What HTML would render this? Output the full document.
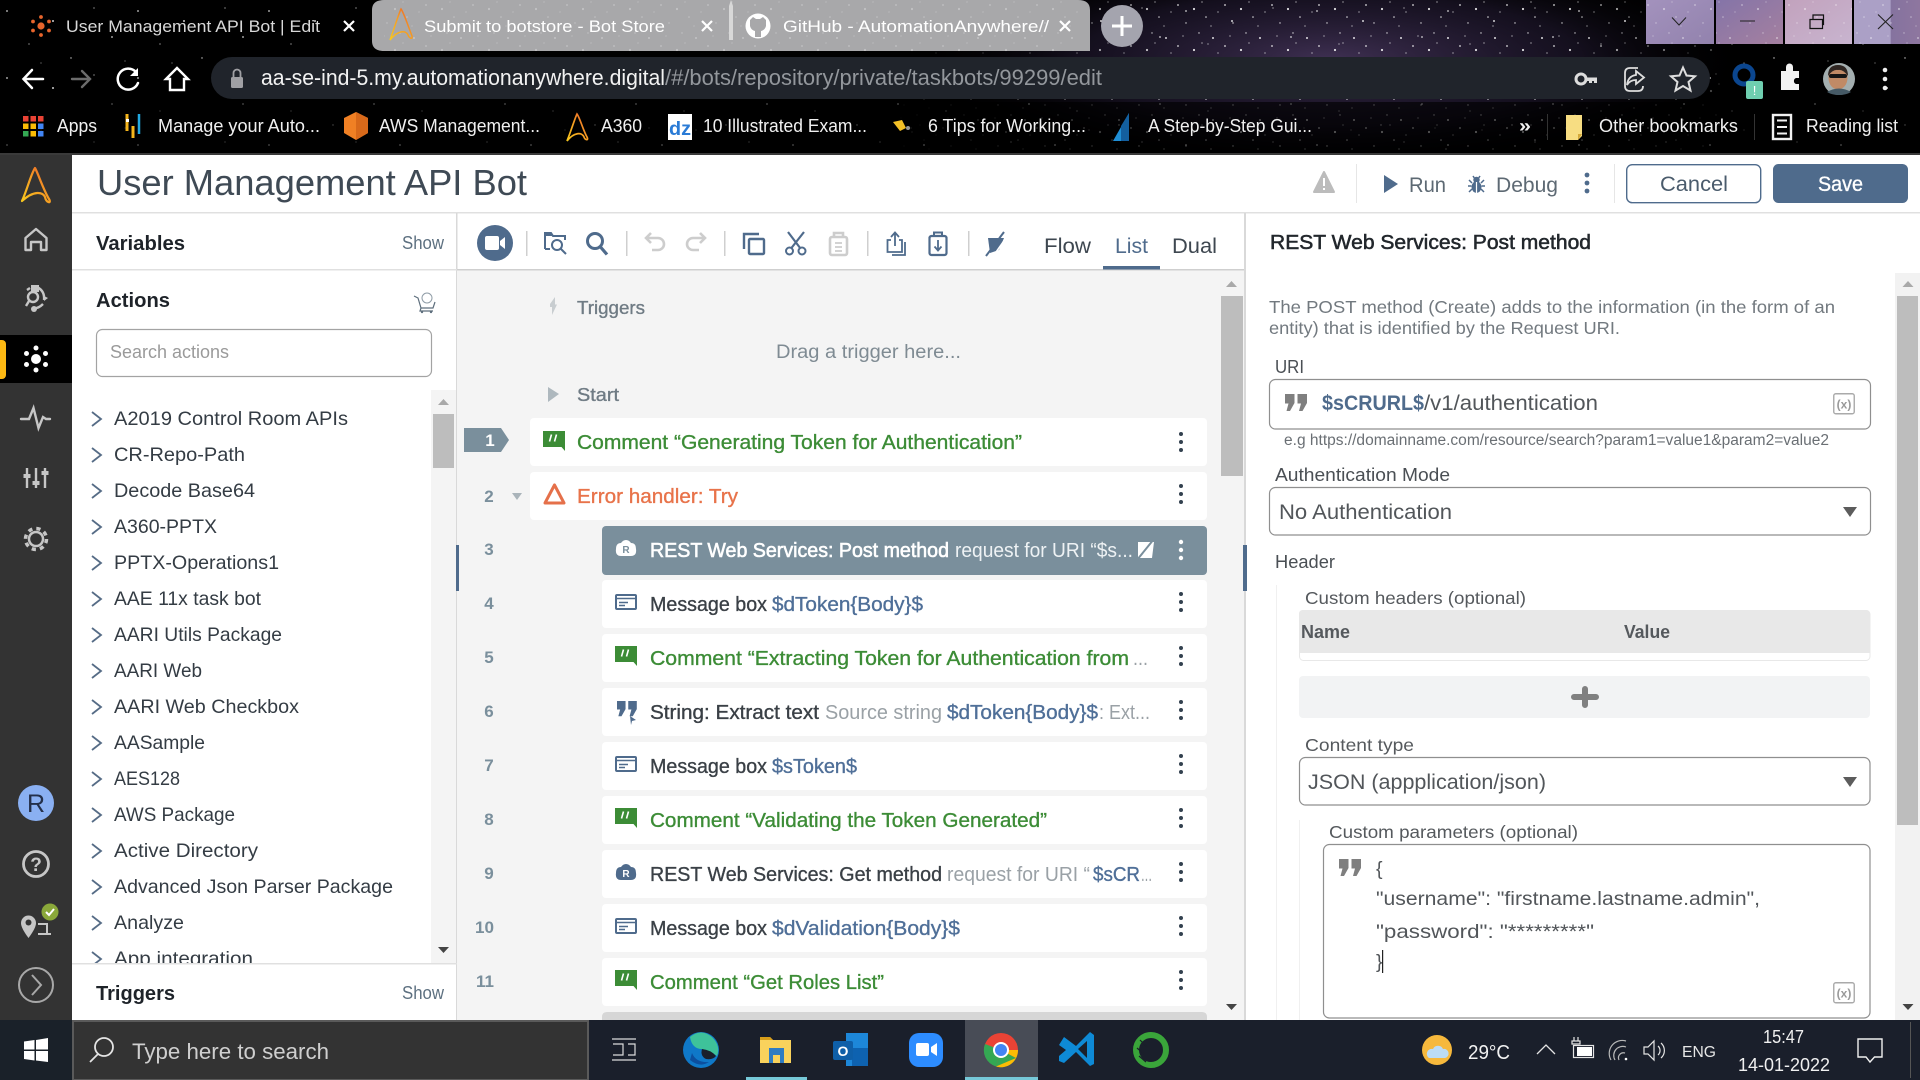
<!DOCTYPE html>
<html lang="en"><head><meta charset="utf-8"><title>User Management API Bot</title>
<style>
html,body{margin:0;padding:0;width:1920px;height:1080px;overflow:hidden;background:#fff}
svg{display:block}
text{font-family:"Liberation Sans",sans-serif;white-space:pre}
.m{stroke-width:.35px;paint-order:stroke}
.b{font-weight:bold}
</style></head><body>
<svg xmlns="http://www.w3.org/2000/svg" width="1920" height="1080" viewBox="0 0 1920 1080">
<defs>
<pattern id="sa" width="131" height="67" patternUnits="userSpaceOnUse"><g fill="#fff">
<circle cx="7" cy="11" r=".9"/><circle cx="29" cy="44" r=".6"/><circle cx="53" cy="21" r="1"/><circle cx="71" cy="58" r=".7"/><circle cx="94" cy="8" r=".6"/><circle cx="112" cy="37" r=".9"/><circle cx="125" cy="61" r=".5"/><circle cx="41" cy="63" r=".5"/></g></pattern>
<pattern id="sb" width="47" height="41" patternUnits="userSpaceOnUse"><g fill="#fff">
<circle cx="3" cy="5" r=".9"/><circle cx="11" cy="23" r=".7"/><circle cx="19" cy="9" r="1.1"/><circle cx="24" cy="33" r=".7"/><circle cx="31" cy="17" r=".8"/><circle cx="38" cy="38" r="1"/><circle cx="43" cy="12" r=".6"/><circle cx="8" cy="36" r=".6"/><circle cx="27" cy="2" r=".6"/><circle cx="36" cy="26" r=".6"/></g></pattern>
<radialGradient id="neb" cx=".5" cy=".5" r=".5"><stop offset="0" stop-color="#54406e" stop-opacity=".75"/><stop offset=".6" stop-color="#32264a" stop-opacity=".4"/><stop offset="1" stop-color="#000" stop-opacity="0"/></radialGradient>
<linearGradient id="fade" x1="0" x2="1"><stop offset="0" stop-color="#fff" stop-opacity=".1"/><stop offset=".35" stop-color="#fff" stop-opacity=".85"/><stop offset=".8" stop-color="#fff" stop-opacity=".85"/><stop offset="1" stop-color="#fff" stop-opacity=".25"/></linearGradient>
<mask id="dense"><rect x="900" y="0" width="820" height="155" fill="url(#fade)"/></mask>
<linearGradient id="lg" x1="0" y1="1" x2="1" y2="0"><stop offset="0" stop-color="#f8c91e"/><stop offset=".55" stop-color="#f59a23"/><stop offset="1" stop-color="#e8552c"/></linearGradient>
<linearGradient id="wa" x1="0" y1="0" x2="1" y2="1"><stop offset="0" stop-color="#a392bd"/><stop offset="1" stop-color="#9282ad"/></linearGradient>
<linearGradient id="wb" x1="0" y1="0" x2="1" y2="1"><stop offset="0" stop-color="#8474a8"/><stop offset="1" stop-color="#a5809f"/></linearGradient>
<linearGradient id="wc" x1="0" y1="0" x2="1" y2="1"><stop offset="0" stop-color="#c2a2bd"/><stop offset="1" stop-color="#c8b4cf"/></linearGradient>
<linearGradient id="wd" x1="0" y1="0" x2="1" y2="0"><stop offset="0" stop-color="#aba0c6"/><stop offset=".55" stop-color="#aba0c6"/><stop offset=".56" stop-color="#85739f"/><stop offset="1" stop-color="#8e769f"/></linearGradient>
<g id="chev"><path d="M0 0L9 7L0 14" fill="none" stroke="#566c86" stroke-width="1.8"/></g>
<g id="keb" fill="#33414f"><circle cx="0" cy="-8" r="2"/><circle cx="0" cy="0" r="2"/><circle cx="0" cy="8" r="2"/></g>
<g id="kebw" fill="#fff"><circle cx="0" cy="-8" r="2.2"/><circle cx="0" cy="0" r="2.2"/><circle cx="0" cy="8" r="2.2"/></g>
<g id="cm"><path d="M0 0H22V20L18.5 16H0Z" fill="#3c8c36"/><path d="M8.500 3.500L6.500 10.500M13.500 3.500L11.500 10.500" stroke="#fff" stroke-width="1.6"/></g>
<g id="msg"><rect x="1" y="1" width="20" height="14" rx="1" fill="none" stroke="#4f6b8c" stroke-width="2"/><path d="M1 4.5H21" stroke="#4f6b8c" stroke-width="1.6"/><path d="M4 8.5H13M4 11.5H10" stroke="#4f6b8c" stroke-width="1.6"/></g>
<g id="q"><path d="M0 0H9.5V9L5 17H1.5L3.5 9.5H0ZM12.5 0H22V9L17.5 17H14L16 9.5H12.5Z"/></g>
<g id="xb"><rect x=".75" y=".75" width="20.5" height="20" rx="2" fill="#fff" stroke="#aaa" stroke-width="1.4"/><text x="11" y="15.5" font-size="12" font-weight="bold" fill="#999" text-anchor="middle">(x)</text></g>
</defs>

<!-- chrome top -->
<rect width="1920" height="155" fill="#000"/>
<ellipse cx="1330" cy="60" rx="420" ry="110" fill="url(#neb)"/>
<rect width="1920" height="155" fill="url(#sa)" opacity=".8"/>
<rect width="1920" height="155" fill="url(#sb)" mask="url(#dense)"/>
<rect x="0" y="102" width="1920" height="51" fill="#000" opacity=".62"/>
<rect x="0" y="153" width="1920" height="3" fill="#3a3a3a"/>

<!-- tabs -->
<g transform="translate(41,26)" fill="#e8652c"><circle r="3.6"/><circle cy="-9" r="1.9"/><circle cy="9" r="1.9"/><circle cx="-8" cy="-4.5" r="1.9"/><circle cx="8" cy="-4.5" r="1.9"/><circle cx="-8" cy="4.5" r="1.9"/><circle cx="8" cy="4.5" r="1.9"/></g>
<text x="66" y="32" font-size="17" fill="#d8d8d8" textLength="254" lengthAdjust="spacingAndGlyphs">User Management API Bot | Edit</text>
<path d="M344 21L354 31M354 21L344 31" stroke="#fff" stroke-width="2.2"/>
<path d="M372 10Q372 0 384 0H1078Q1090 0 1090 10V51H384Q372 51 372 41Z" fill="#a8a8aa"/>
<rect x="384" y="0" width="694" height="51" fill="url(#sb)" opacity=".3"/>
<path d="M729 6L731 0L733 6V40H729Z" fill="#d8d8d8"/>
<path d="M390 40C395 26 399 13 401 9C404 13 408 26 412 36C413 40 409 38 408 35C406 30 398 30 390 40Z" fill="none" stroke="url(#lg)" stroke-width="1.5"/>
<text x="424" y="32" font-size="17" fill="#fff" textLength="241" lengthAdjust="spacingAndGlyphs">Submit to botstore - Bot Store</text>
<path d="M702 21L712 31M712 21L702 31" stroke="#fff" stroke-width="2.2"/>
<circle cx="758" cy="26" r="12.5" fill="#fff"/><path d="M750 20L753 17L756 19H760L763 17L766 20V26Q765 30 761 31V37H755V31Q751 30 750 26Z" fill="#a8a8aa"/>
<text x="783" y="32" font-size="17" fill="#fff" textLength="266" lengthAdjust="spacingAndGlyphs">GitHub - AutomationAnywhere//</text>
<path d="M1060 21L1070 31M1070 21L1060 31" stroke="#fff" stroke-width="2.2"/>
<circle cx="1122" cy="26" r="21" fill="#a4a4ae"/><path d="M1122 16V36M1112 26H1132" stroke="#fff" stroke-width="3"/>
<!-- window controls -->
<rect x="1646" width="68" height="44" fill="url(#wa)"/><rect x="1716" width="67" height="44" fill="url(#wb)"/><rect x="1785" width="67" height="44" fill="url(#wc)"/><rect x="1854" width="66" height="44" fill="url(#wd)"/>
<rect x="1646" width="274" height="44" fill="url(#sb)" opacity=".45"/>
<rect x="1714" width="2" height="44" fill="#000"/><rect x="1783" width="2" height="44" fill="#000"/><rect x="1852" width="2" height="44" fill="#000"/>
<path d="M1672 17.5L1679 25L1686 17.5M1740 21H1755" fill="none" stroke="#222" stroke-width="1"/>
<path d="M1810 19.500V28.500H1822.500V19.500ZM1813 19V15H1823.500V24.500H1822.500" fill="none" stroke="#111" stroke-width="1.2"/>
<path d="M1878 14.500L1893 29M1893 14.500L1878 29" stroke="#222" stroke-width="1.1"/>

<!-- nav row -->
<g fill="none" stroke-linecap="round">
<path d="M24 79H43M32 70L23.500 79L32 88" stroke="#fff" stroke-width="2.5"/>
<path d="M72 79H90M82 71L90 79L82 87" stroke="#6c6c6c" stroke-width="2.400"/>
<path d="M136 72A10.500 10.500 0 1 0 138 83" stroke="#fff" stroke-width="2.500"/></g>
<path d="M138 68V76H130Z" fill="#fff"/>
<path d="M166 79L177 68L188 79H184V90H170V79Z" fill="none" stroke="#fff" stroke-width="2.400"/>
<rect x="211" y="57" width="1499" height="42" rx="21" fill="#20242b"/>
<rect x="231" y="77" width="12" height="11" rx="1.500" fill="#a0a0a4"/><path d="M233.500 77V73A3.500 3.500 0 0 1 240.500 73V77" fill="none" stroke="#a0a0a4" stroke-width="1.800"/>
<text x="261" y="85" font-size="22" fill="#f2f2f2" textLength="404" lengthAdjust="spacingAndGlyphs">aa-se-ind-5.my.automationanywhere.digital</text>
<text x="665" y="85" font-size="22" fill="#93979c" textLength="437" lengthAdjust="spacingAndGlyphs">/#/bots/repository/private/taskbots/99299/edit</text>
<circle cx="1581" cy="79" r="5" fill="none" stroke="#ddd" stroke-width="3"/><path d="M1586 77.500H1597V83H1594V81H1592V83H1589V81H1586Z" fill="#ddd"/>
<path d="M1636 75V71L1644 77.500L1636 84V80Q1630 80 1627 85Q1628 76 1636 75ZM1638 68H1630Q1625 68 1625 73V86Q1625 91 1630 91H1638Q1643 91 1643 86" fill="none" stroke="#ddd" stroke-width="1.800"/>
<path d="M1683 67.500L1686.500 75.500L1695 76.300L1688.500 82L1690.500 90.500L1683 86L1675.500 90.500L1677.500 82L1671 76.300L1679.500 75.500Z" fill="none" stroke="#ddd" stroke-width="2"/>
<circle cx="1744" cy="75" r="9" fill="none" stroke="#0b468f" stroke-width="5"/>
<rect x="1746" y="81" width="17" height="18" rx="2" fill="#6fcfb0"/><text x="1754.500" y="95" font-size="13" fill="#fff" text-anchor="middle">!</text>
<path d="M1781 73H1786V69A3.500 3.500 0 0 1 1793 69V73H1799V80H1796A3.200 3.200 0 0 0 1796 86H1799V92H1781Z" fill="#f2f2f2" transform="translate(0,-2)"/>
<circle cx="1839" cy="79" r="16" fill="#a3aeaf"/>
<ellipse cx="1838" cy="78" rx="9.500" ry="11.500" fill="#c08a66"/>
<path d="M1828 76Q1828 65 1838 65Q1848 65 1848 76Q1843 69 1838 70Q1833 69 1828 76Z" fill="#2f2622"/>
<rect x="1829" y="74" width="18" height="4" rx="2" fill="#161616"/>
<path d="M1827 92Q1839 85 1851 92Q1846 95 1839 95Q1832 95 1827 92Z" fill="#465a66"/>
<g fill="#eee"><circle cx="1885" cy="70" r="2.300"/><circle cx="1885" cy="79" r="2.300"/><circle cx="1885" cy="88" r="2.300"/></g>

<!-- bookmarks -->
<g><rect x="23" y="116" width="5.500" height="5.500" fill="#ea4335"/><rect x="30.500" y="116" width="5.500" height="5.500" fill="#ea4335"/><rect x="38" y="116" width="5.500" height="5.500" fill="#ea4335"/><rect x="23" y="123.500" width="5.500" height="5.500" fill="#fbbc05"/><rect x="30.500" y="123.500" width="5.500" height="5.500" fill="#fbbc05"/><rect x="38" y="123.500" width="5.500" height="5.500" fill="#4285f4"/><rect x="23" y="131" width="5.500" height="5.500" fill="#34a853"/><rect x="30.500" y="131" width="5.500" height="5.500" fill="#fbbc05"/><rect x="38" y="131" width="5.500" height="5.500" fill="#4285f4"/></g>
<g font-size="18" fill="#f0f0f0">
<text x="57" y="132" textLength="40" lengthAdjust="spacingAndGlyphs">Apps</text>
<text x="158" y="132" textLength="162" lengthAdjust="spacingAndGlyphs">Manage your Auto...</text>
<text x="379" y="132" textLength="161" lengthAdjust="spacingAndGlyphs">AWS Management...</text>
<text x="601" y="132" textLength="41" lengthAdjust="spacingAndGlyphs">A360</text>
<text x="703" y="132" textLength="164" lengthAdjust="spacingAndGlyphs">10 Illustrated Exam...</text>
<text x="928" y="132" textLength="158" lengthAdjust="spacingAndGlyphs">6 Tips for Working...</text>
<text x="1148" y="132" textLength="164" lengthAdjust="spacingAndGlyphs">A Step-by-Step Gui...</text>
<text x="1519" y="132" font-weight="bold" textLength="12" lengthAdjust="spacingAndGlyphs">»</text>
<text x="1599" y="132" textLength="139" lengthAdjust="spacingAndGlyphs">Other bookmarks</text>
<text x="1806" y="132" textLength="92" lengthAdjust="spacingAndGlyphs">Reading list</text></g>
<path d="M127 114V131M133 126V138" stroke="#f5b51b" stroke-width="3"/><path d="M139 114V134" stroke="#22a9e0" stroke-width="2.500"/><rect x="126" y="119" width="3" height="3" fill="#fff"/>
<path d="M356 112L368 118V133L356 140L344 133V118Z" fill="#f08024"/><path d="M356 112L368 118V133L356 140Z" fill="#d8691a"/>
<path d="M567 141C571 131 575 118 577 114C580 118 583 130 587 137C589 141 585 140 584 137C582 132 574 132 567 141Z" fill="none" stroke="url(#lg)" stroke-width="1.700"/>
<rect x="668" y="114" width="24" height="26" fill="#fff"/><text x="669" y="135" font-size="19" font-weight="bold" fill="#2a7bd6" textLength="22" lengthAdjust="spacingAndGlyphs">dz</text>
<path d="M893 122L902 120L906 128L900 131Z" fill="#f3c026"/><circle cx="908" cy="128" r="2" fill="#999"/>
<path d="M1113 141L1129 113V141Z" fill="#1f8fd6"/><path d="M1121 126V141H1129V113Z" fill="#135f9f"/>
<rect x="1547" y="114" width="1" height="26" fill="#333"/><rect x="1754" y="114" width="1" height="26" fill="#333"/>
<path d="M1566 115H1582V136L1578 140H1566Z" fill="#f7dd82"/><path d="M1578 140L1582 134H1578Z" fill="#d4a93a"/>
<rect x="1773" y="115" width="18" height="24" fill="none" stroke="#f0f0f0" stroke-width="2.400"/><path d="M1777 120.500H1787M1777 127H1787M1777 133.500H1787" stroke="#f0f0f0" stroke-width="2"/>

<!-- main app -->
<rect x="0" y="155" width="1920" height="865" fill="#fff"/>
<rect x="0" y="155" width="72" height="865" fill="#333"/>
<rect x="0" y="335" width="72" height="48" fill="#000"/>
<rect x="-6" y="340" width="12" height="39" rx="4" fill="#fdb913"/>
<path d="M22 201C27 190 31 174 35 168C38 173 43 189 49 199C52 204 46 203 45 197C43 192 34 190 22 201Z" fill="none" stroke="url(#lg)" stroke-width="2.200" stroke-linejoin="round"/>
<g fill="none" stroke="#c6c6c6" stroke-width="2.400">
<path d="M25.500 250V238L36 229L46.500 238V250H41V242H31V250Z" stroke-linejoin="round"/>
<circle cx="33" cy="297" r="5"/><path d="M29 301L26 306M37 287Q45 291 44 300M27 290L30 288M43 304Q38 309 33 308"/>
<path d="M21 419H29L33.500 408L38.500 428L43 417L46 419H50" stroke-linecap="round"/>
<path d="M27 468V488M36 468V488M45 468V488"/>
</g>
<path d="M31 285H39V292H31Z" fill="#c6c6c6"/><path d="M44 296L48 298L44 301Z" fill="#c6c6c6"/><circle cx="34" cy="309" r="3" fill="#c6c6c6"/>
<g fill="#c6c6c6"><rect x="23.500" y="474" width="7" height="4"/><rect x="32.500" y="481" width="7" height="4"/><rect x="41.500" y="471" width="7" height="4"/></g>
<g fill="#fff"><circle cx="36" cy="359" r="5"/><circle cx="36" cy="348" r="2.500"/><circle cx="36" cy="370" r="2.500"/><circle cx="26.500" cy="353.500" r="2.500"/><circle cx="45.500" cy="353.500" r="2.500"/><circle cx="26.500" cy="364.500" r="2.500"/><circle cx="45.500" cy="364.500" r="2.500"/></g>
<circle cx="36" cy="539" r="7" fill="none" stroke="#c6c6c6" stroke-width="2.500"/><circle cx="36" cy="539" r="10.500" fill="none" stroke="#c6c6c6" stroke-width="3.500" stroke-dasharray="4.200 4.050"/>
<circle cx="36" cy="803" r="18" fill="#8ab0f2"/><text x="36" y="812" font-size="25" fill="#24304a" text-anchor="middle">R</text>
<circle cx="36" cy="864" r="12.500" fill="none" stroke="#c6c6c6" stroke-width="2.800"/><text x="36" y="871" font-size="19" font-weight="bold" fill="#c6c6c6" text-anchor="middle">?</text>
<path d="M21 923A7.500 7.500 0 0 1 36 923Q36 928 28.500 938Q21 928 21 923Z" fill="#c6c6c6"/><circle cx="28.500" cy="922.500" r="3" fill="#333"/>
<path d="M38 924H47V934M38 934H51" fill="none" stroke="#c6c6c6" stroke-width="2"/>
<circle cx="50" cy="912" r="8.500" fill="#8aa83a"/><path d="M46 912L49 915L54 909" fill="none" stroke="#fff" stroke-width="2"/>
<circle cx="36" cy="985" r="17" fill="none" stroke="#a8a8a8" stroke-width="2"/><path d="M32 975L41 985L32 995" fill="none" stroke="#a8a8a8" stroke-width="2"/>

<!-- header -->
<text x="97" y="195" font-size="36" fill="#3f4a55" textLength="430" lengthAdjust="spacingAndGlyphs">User Management API Bot</text>
<rect x="72" y="212" width="1848" height="1.500" fill="#e0e0e0"/>
<path d="M1324 172L1334 192H1314Z" fill="#bcbcbc" stroke="#bcbcbc" stroke-width="2" stroke-linejoin="round"/><path d="M1324 178V186M1324 188V190" stroke="#fff" stroke-width="2"/>
<rect x="1356" y="164" width="1" height="39" fill="#e6e6e6"/><rect x="1614" y="164" width="1" height="39" fill="#e6e6e6"/>
<path d="M1384 175L1398 184L1384 193Z" fill="#4f6b8c"/>
<text x="1409" y="192" font-size="21" fill="#5d6973" textLength="37" lengthAdjust="spacingAndGlyphs">Run</text>
<path d="M1473 176L1475 179M1480 176L1478 179M1469 180L1472 183M1484 180L1481 183M1468 186H1471.500M1485 186H1481.500M1469 192L1472 189M1484 192L1481 189" stroke="#4f6b8c" stroke-width="1.500"/>
<circle cx="1476.500" cy="180" r="3.200" fill="#4f6b8c"/><ellipse cx="1476.500" cy="187" rx="5" ry="5.800" fill="#4f6b8c"/><path d="M1476.500 182V193" stroke="#fff" stroke-width="1.200"/>
<text x="1496" y="192" font-size="21" fill="#5d6973" textLength="62" lengthAdjust="spacingAndGlyphs">Debug</text>
<g fill="#4f6b8c"><circle cx="1587" cy="175" r="2.400"/><circle cx="1587" cy="183" r="2.400"/><circle cx="1587" cy="191" r="2.400"/></g>
<rect x="1626.700" y="164.700" width="134" height="38" rx="5.500" fill="#fff" stroke="#4f6b8c" stroke-width="1.400"/>
<text x="1660" y="191" font-size="21" fill="#4a5b6c" textLength="68" lengthAdjust="spacingAndGlyphs">Cancel</text>
<rect x="1773" y="164" width="135" height="39" rx="5.500" fill="#4f6b8c"/>
<text x="1818" y="191" font-size="21" fill="#fff" class="m" stroke="#fff" textLength="45" lengthAdjust="spacingAndGlyphs">Save</text>

<!-- left panel -->
<rect x="456" y="213" width="1.500" height="807" fill="#d9d9d9"/>
<rect x="72" y="269" width="385" height="1.500" fill="#e0e0e0"/>
<g font-size="20" font-weight="bold" fill="#1e2329">
<text x="96" y="250" textLength="89" lengthAdjust="spacingAndGlyphs">Variables</text>
<text x="96" y="307" textLength="74" lengthAdjust="spacingAndGlyphs">Actions</text>
<text x="96" y="1000" textLength="79" lengthAdjust="spacingAndGlyphs">Triggers</text></g>
<g font-size="18" fill="#5d7080"><text x="402" y="249" textLength="42" lengthAdjust="spacingAndGlyphs">Show</text><text x="402" y="999" textLength="42" lengthAdjust="spacingAndGlyphs">Show</text></g>
<path d="M414 296L418 298L421 308H433L435 302M421 308L420 311H433" fill="none" stroke="#5d6e7c" stroke-width="1.200"/><circle cx="427" cy="298" r="5" fill="none" stroke="#8f9ca6" stroke-width="1"/><circle cx="422" cy="312" r="1.200" fill="#5d6e7c"/><circle cx="431" cy="312" r="1.200" fill="#5d6e7c"/>
<rect x="96.500" y="329.500" width="335" height="47" rx="6" fill="#fff" stroke="#a3a3a3" stroke-width="1.200"/>
<text x="110" y="358" font-size="18" fill="#9a9a9a" textLength="119" lengthAdjust="spacingAndGlyphs">Search actions</text>
<svg x="72" y="390" width="359" height="573" viewBox="72 390 359 573">
<g font-size="19.500" fill="#343c44">
<text x="114" y="425" textLength="234" lengthAdjust="spacingAndGlyphs">A2019 Control Room APIs</text>
<text x="114" y="461" textLength="131" lengthAdjust="spacingAndGlyphs">CR-Repo-Path</text>
<text x="114" y="497" textLength="141" lengthAdjust="spacingAndGlyphs">Decode Base64</text>
<text x="114" y="533" textLength="103" lengthAdjust="spacingAndGlyphs">A360-PPTX</text>
<text x="114" y="569" textLength="165" lengthAdjust="spacingAndGlyphs">PPTX-Operations1</text>
<text x="114" y="605" textLength="147" lengthAdjust="spacingAndGlyphs">AAE 11x task bot</text>
<text x="114" y="641" textLength="168" lengthAdjust="spacingAndGlyphs">AARI Utils Package</text>
<text x="114" y="677" textLength="88" lengthAdjust="spacingAndGlyphs">AARI Web</text>
<text x="114" y="713" textLength="185" lengthAdjust="spacingAndGlyphs">AARI Web Checkbox</text>
<text x="114" y="749" textLength="91" lengthAdjust="spacingAndGlyphs">AASample</text>
<text x="114" y="785" textLength="66" lengthAdjust="spacingAndGlyphs">AES128</text>
<text x="114" y="821" textLength="121" lengthAdjust="spacingAndGlyphs">AWS Package</text>
<text x="114" y="857" textLength="144" lengthAdjust="spacingAndGlyphs">Active Directory</text>
<text x="114" y="893" textLength="279" lengthAdjust="spacingAndGlyphs">Advanced Json Parser Package</text>
<text x="114" y="929" textLength="70" lengthAdjust="spacingAndGlyphs">Analyze</text>
<text x="114" y="965" textLength="139" lengthAdjust="spacingAndGlyphs">App integration</text>
</g>
<use href="#chev" x="92" y="412"/><use href="#chev" x="92" y="448"/><use href="#chev" x="92" y="484"/><use href="#chev" x="92" y="520"/><use href="#chev" x="92" y="556"/><use href="#chev" x="92" y="592"/><use href="#chev" x="92" y="628"/><use href="#chev" x="92" y="664"/><use href="#chev" x="92" y="700"/><use href="#chev" x="92" y="736"/><use href="#chev" x="92" y="772"/><use href="#chev" x="92" y="808"/><use href="#chev" x="92" y="844"/><use href="#chev" x="92" y="880"/><use href="#chev" x="92" y="916"/><use href="#chev" x="92" y="952"/>
</svg>
<rect x="431" y="390" width="25" height="573" fill="#f4f4f4"/>
<rect x="433" y="414" width="21" height="54" fill="#bdbdbd"/>
<path d="M438 405L443.500 399L449 405Z" fill="#a9a9a9"/><path d="M438 947L443.500 953L449 947Z" fill="#444"/>
<rect x="72" y="963" width="385" height="1.500" fill="#e0e0e0"/>

<!-- middle -->
<rect x="457" y="270" width="787" height="750" fill="#f4f4f4"/>
<rect x="457" y="269" width="787" height="1.500" fill="#cfcfcf"/>
<rect x="1244" y="213" width="2" height="807" fill="#d9d9d9"/>
<circle cx="495" cy="243" r="18" fill="#4f6b8c"/><rect x="485" y="236" width="14" height="14" rx="2" fill="#fff"/><path d="M500 241L505 237V249L500 245Z" fill="#fff"/>
<g fill="#cfcfcf"><rect x="526" y="231" width="1.500" height="25"/><rect x="626" y="231" width="1.500" height="25"/><rect x="724" y="231" width="1.500" height="25"/><rect x="867" y="231" width="1.500" height="25"/><rect x="968" y="231" width="1.500" height="25"/></g>
<g fill="none" stroke="#4f6b8c" stroke-width="2">
<path d="M545 249V233H551L553 236H565V240"/><path d="M545 249H550" /><path d="M545 233H552V236H544Z" fill="#4f6b8c" stroke="none"/>
<circle cx="557" cy="245" r="5"/><path d="M561 249L566 254"/>
<circle cx="595" cy="241" r="7.500" stroke-width="3"/><path d="M600.500 247L607 254.500" stroke-width="3.200"/>
<rect x="749" y="239" width="15" height="15" rx="1" stroke-width="2.400"/><path d="M744 249V234H759" stroke-width="2.400"/>
<circle cx="789.500" cy="251" r="3.500"/><circle cx="802" cy="251" r="3.500"/><path d="M788 232L800.500 248.500M804 232L791 248.500" stroke-width="2.200"/>
<path d="M891 240H887.500V252H902V240H899M905 242V255H892M895 246V233M891 237L895 232.500L899 237" stroke-width="1.800"/>
<rect x="929.500" y="236" width="17" height="19" rx="2" stroke-width="2.200"/><path d="M934 236V232.500H942V236" stroke-width="2"/><path d="M938 240V250M934.500 246.500L938 250.500L941.500 246.500" stroke-width="1.800"/>
</g>
<g fill="none" stroke="#cdcdcd" stroke-width="2.600">
<path d="M651 233L646 238L651 243M646 238H658A6 6 0 0 1 658 250H652"/><path d="M700 233L705 238L700 243M705 238H693A6 6 0 0 0 693 250H699"/>
<rect x="830" y="237" width="17" height="18" rx="2"/><path d="M834 237V233H843V237"/><path d="M835 243H842M835 247H842M835 251H842" stroke-width="1.800"/>
</g>
<path d="M988 238H1004L999 250L990 253Z" fill="#4f6b8c"/><path d="M986 256L1004 232" stroke="#4f6b8c" stroke-width="2"/><path d="M994 255L1006 238" stroke="#fff" stroke-width="1.600"/>
<g font-size="21" fill="#3e4750">
<text x="1044" y="253" textLength="47" lengthAdjust="spacingAndGlyphs">Flow</text>
<text x="1115" y="253" textLength="33" lengthAdjust="spacingAndGlyphs" fill="#4f6b8c">List</text>
<text x="1172" y="253" textLength="45" lengthAdjust="spacingAndGlyphs">Dual</text></g>
<rect x="1103" y="266" width="57" height="3.500" fill="#4f6b8c"/>

<path d="M551 305L556 298V305.500L558 305.500L553 316V308H551Z" fill="#c8cdd0" transform="translate(-1,-1)"/>
<text x="577" y="314" font-size="18.500" fill="#6f7b84" class="m" stroke="#6f7b84" textLength="68" lengthAdjust="spacingAndGlyphs">Triggers</text>
<text x="776" y="358" font-size="19" fill="#7f8b93" textLength="185" lengthAdjust="spacingAndGlyphs">Drag a trigger here...</text>
<path d="M548 387L559 394L548 402Z" fill="#aeb8be"/>
<text x="577" y="401" font-size="18.500" fill="#6f7b84" class="m" stroke="#6f7b84" textLength="42" lengthAdjust="spacingAndGlyphs">Start</text>

<!-- rows -->
<g fill="#fff">
<rect x="530" y="418" width="677" height="48" rx="4"/><rect x="530" y="472" width="677" height="48" rx="4"/>
<rect x="602" y="526" width="605" height="49" rx="4" fill="#7a8f9c"/>
<rect x="602" y="580" width="605" height="48" rx="4"/><rect x="602" y="634" width="605" height="48" rx="4"/><rect x="602" y="688" width="605" height="48" rx="4"/><rect x="602" y="742" width="605" height="48" rx="4"/><rect x="602" y="796" width="605" height="48" rx="4"/><rect x="602" y="850" width="605" height="48" rx="4"/><rect x="602" y="904" width="605" height="48" rx="4"/><rect x="602" y="958" width="605" height="48" rx="4"/>
</g>
<path d="M602 1020V1017Q602 1012 607 1012H1202Q1207 1012 1207 1017V1020Z" fill="#d6d6d6"/>
<rect x="456" y="545" width="3" height="46" fill="#4f6b8c"/><rect x="1243" y="545" width="4" height="46" fill="#4f6b8c"/>
<rect x="1221" y="296" width="22" height="180" fill="#bdbdbd"/>
<path d="M1226 287L1231.500 281L1237 287Z" fill="#a9a9a9"/><path d="M1226 1004L1231.500 1010L1237 1004Z" fill="#444"/>

<path d="M464 428H501L509 440L501 452H464Z" fill="#7a8f9c"/>
<g font-size="17" font-weight="bold" fill="#7a8f9c" text-anchor="middle">
<text x="490" y="446" fill="#fff">1</text><text x="489" y="502">2</text><text x="489" y="555">3</text><text x="489" y="609">4</text><text x="489" y="663">5</text><text x="489" y="717">6</text><text x="489" y="771">7</text><text x="489" y="825">8</text><text x="489" y="879">9</text></g>
<g font-size="17" font-weight="bold" fill="#7a8f9c"><text x="475" y="933" textLength="19" lengthAdjust="spacingAndGlyphs">10</text><text x="476" y="987" textLength="18" lengthAdjust="spacingAndGlyphs">11</text></g>
<path d="M512 493H522L517 500Z" fill="#aab4ba"/>

<use href="#cm" x="543" y="431"/>
<path d="M554.500 485L564 503H545Z" fill="none" stroke="#e5704a" stroke-width="3" stroke-linejoin="round"/>
<use href="#cm" x="615" y="646"/><use href="#cm" x="615" y="808"/><use href="#cm" x="615" y="970"/>
<use href="#msg" x="615" y="594"/><use href="#msg" x="615" y="756"/><use href="#msg" x="615" y="918"/>
<use href="#q" x="617" y="701" fill="#4f6b8c" transform="translate(61.700,70.100) scale(.9)"/>
<path d="M630 716L636 720L632 721L631 725Z" fill="#4f6b8c"/>
<path d="M616 549Q616 543 621 543Q623 540 626 540Q629 540 631 543Q636 543 636 549Q637 556 631 556H621Q615 556 616 549Z" fill="#fff"/>
<text x="626" y="553" font-size="10" font-weight="bold" fill="#7a8f9c" text-anchor="middle">R</text>
<path d="M616 873Q616 867 621 867Q623 864 626 864Q629 864 631 867Q636 867 636 873Q637 880 631 880H621Q615 880 616 873Z" fill="#4f6b8c"/>
<text x="626" y="877" font-size="10" font-weight="bold" fill="#fff" text-anchor="middle">R</text>

<g font-size="20.500">
<g fill="#3c8c36" stroke="#3c8c36" class="m">
<text x="577" y="449" textLength="445" lengthAdjust="spacingAndGlyphs">Comment “Generating Token for Authentication”</text>
<text x="650" y="665" textLength="479" lengthAdjust="spacingAndGlyphs">Comment “Extracting Token for Authentication from</text>
<text x="650" y="827" textLength="397" lengthAdjust="spacingAndGlyphs">Comment “Validating the Token Generated”</text>
<text x="650" y="989" textLength="234" lengthAdjust="spacingAndGlyphs">Comment “Get Roles List”</text></g>
<text x="577" y="503" fill="#e8734a" stroke="#e8734a" class="m" textLength="161" lengthAdjust="spacingAndGlyphs">Error handler: Try</text>
<text x="650" y="557" fill="#fff" stroke="#fff" class="m" style="stroke-width:.6px" textLength="299" lengthAdjust="spacingAndGlyphs">REST Web Services: Post method</text>
<text x="955" y="557" fill="#eef2f4" textLength="178" lengthAdjust="spacingAndGlyphs">request for URI “$s...</text>
<g fill="#3a4046" stroke="#3a4046" class="m">
<text x="650" y="611" textLength="117" lengthAdjust="spacingAndGlyphs">Message box</text>
<text x="650" y="719" textLength="169" lengthAdjust="spacingAndGlyphs">String: Extract text</text>
<text x="650" y="773" textLength="117" lengthAdjust="spacingAndGlyphs">Message box</text>
<text x="650" y="881" textLength="292" lengthAdjust="spacingAndGlyphs">REST Web Services: Get method</text>
<text x="650" y="935" textLength="117" lengthAdjust="spacingAndGlyphs">Message box</text></g>
<g fill="#4f6f98" stroke="#4f6f98" class="m">
<text x="772" y="611" textLength="151" lengthAdjust="spacingAndGlyphs">$dToken{Body}$</text>
<text x="947" y="719" textLength="151" lengthAdjust="spacingAndGlyphs">$dToken{Body}$</text>
<text x="772" y="773" textLength="85" lengthAdjust="spacingAndGlyphs">$sToken$</text>
<text x="1093" y="881" textLength="47" lengthAdjust="spacingAndGlyphs">$sCR</text>
<text x="772" y="935" textLength="188" lengthAdjust="spacingAndGlyphs">$dValidation{Body}$</text></g>
<g fill="#9aa1a6">
<text x="1133" y="665" textLength="15" lengthAdjust="spacingAndGlyphs">...</text>
<text x="825" y="719" textLength="117" lengthAdjust="spacingAndGlyphs">Source string</text>
<text x="1099" y="719" textLength="51" lengthAdjust="spacingAndGlyphs">: Ext...</text>
<text x="947" y="881" textLength="143" lengthAdjust="spacingAndGlyphs">request for URI “</text>
<text x="1141" y="881" textLength="11" lengthAdjust="spacingAndGlyphs">...</text></g>
</g>
<path d="M1138 542H1154L1152 558H1138Z" fill="#fff"/><path d="M1137 560L1154 539" stroke="#7a8f9c" stroke-width="2"/>
<use href="#keb" x="1181" y="442"/><use href="#keb" x="1181" y="494"/><use href="#kebw" x="1181" y="550"/><use href="#keb" x="1181" y="602"/><use href="#keb" x="1181" y="656"/><use href="#keb" x="1181" y="710"/><use href="#keb" x="1181" y="764"/><use href="#keb" x="1181" y="818"/><use href="#keb" x="1181" y="872"/><use href="#keb" x="1181" y="926"/><use href="#keb" x="1181" y="980"/>

<!-- right panel -->
<text x="1270" y="249" font-size="20.500" fill="#22272c" stroke="#22272c" class="m" style="stroke-width:.55px" textLength="321" lengthAdjust="spacingAndGlyphs">REST Web Services: Post method</text>
<rect x="1895" y="273" width="25" height="747" fill="#f2f2f2"/>
<rect x="1897" y="296" width="21" height="529" fill="#bdbdbd"/>
<path d="M1902.500 287L1908 281L1913.500 287Z" fill="#a9a9a9"/><path d="M1902.500 1004L1908 1010L1913.500 1004Z" fill="#444"/>
<g font-size="17.500" fill="#72797f">
<text x="1269" y="313" textLength="566" lengthAdjust="spacingAndGlyphs">The POST method (Create) adds to the information (in the form of an</text>
<text x="1269" y="334" textLength="351" lengthAdjust="spacingAndGlyphs">entity) that is identified by the Request URI.</text></g>
<g font-size="18" fill="#4a4f54">
<text x="1275" y="373" textLength="29" lengthAdjust="spacingAndGlyphs">URI</text>
<text x="1275" y="481" textLength="175" lengthAdjust="spacingAndGlyphs">Authentication Mode</text>
<text x="1275" y="568" textLength="60" lengthAdjust="spacingAndGlyphs">Header</text></g>
<g font-size="17.500" fill="#55595d">
<text x="1305" y="604" textLength="221" lengthAdjust="spacingAndGlyphs">Custom headers (optional)</text>
<text x="1305" y="751" textLength="109" lengthAdjust="spacingAndGlyphs">Content type</text>
<text x="1329" y="838" textLength="249" lengthAdjust="spacingAndGlyphs">Custom parameters (optional)</text></g>
<rect x="1269.500" y="379.500" width="601" height="49.500" rx="6" fill="#fff" stroke="#8f8f8f" stroke-width="1.200"/>
<use href="#q" x="1285" y="394" fill="#7f7f7f"/>
<text x="1322" y="410" font-size="21" font-weight="bold" fill="#4f6b8c" textLength="102" lengthAdjust="spacingAndGlyphs">$sCRURL$</text>
<text x="1424" y="410" font-size="21" fill="#52565a" textLength="174" lengthAdjust="spacingAndGlyphs">/v1/authentication</text>
<use href="#xb" x="1833" y="393"/>
<text x="1284" y="445" font-size="15.500" fill="#6a6f74" textLength="545" lengthAdjust="spacingAndGlyphs">e.g https://domainname.com/resource/search?param1=value1&amp;param2=value2</text>
<rect x="1269.500" y="487.500" width="601" height="47.500" rx="6" fill="#fff" stroke="#8f8f8f" stroke-width="1.200"/>
<text x="1279" y="519" font-size="21" fill="#52565a" textLength="173" lengthAdjust="spacingAndGlyphs">No Authentication</text>
<path d="M1843 507H1857L1850 517Z" fill="#5c5c5c"/>
<rect x="1276" y="585" width="1" height="435" fill="#f0f0f0"/>
<rect x="1299.500" y="610.500" width="570.500" height="50" rx="4" fill="#fff" stroke="#e8e8e8" stroke-width="1"/>
<path d="M1299 653V614Q1299 610 1303 610H1866Q1870 610 1870 614V653Z" fill="#e8e8e8"/>
<text x="1301" y="638" font-size="18" font-weight="bold" fill="#55595d" textLength="49" lengthAdjust="spacingAndGlyphs">Name</text>
<text x="1624" y="638" font-size="18" font-weight="bold" fill="#55595d" textLength="46" lengthAdjust="spacingAndGlyphs">Value</text>
<rect x="1299" y="676" width="571" height="42" rx="4" fill="#f2f3f4"/>
<path d="M1585 689V705M1574 697H1596" stroke="#808080" stroke-width="6" stroke-linecap="round"/>
<rect x="1299.500" y="757.500" width="570.500" height="47.500" rx="6" fill="#fff" stroke="#8f8f8f" stroke-width="1.200"/>
<text x="1308" y="789" font-size="21" fill="#52565a" textLength="238" lengthAdjust="spacingAndGlyphs">JSON (appplication/json)</text>
<path d="M1843 777H1857L1850 787Z" fill="#5c5c5c"/>
<rect x="1299" y="820" width="1" height="200" fill="#f0f0f0"/>
<rect x="1323.500" y="844.500" width="546.500" height="173.500" rx="6" fill="#fff" stroke="#8f8f8f" stroke-width="1.200"/>
<use href="#q" x="1339" y="859" fill="#7f7f7f"/>
<g font-size="19.500" fill="#52565a">
<text x="1376" y="875">{</text>
<text x="1376" y="905" textLength="384" lengthAdjust="spacingAndGlyphs">"username": "firstname.lastname.admin",</text>
<text x="1376" y="938" textLength="218" lengthAdjust="spacingAndGlyphs">"password": "*********"</text>
<text x="1376" y="968">}</text></g>
<rect x="1382" y="950" width="1.200" height="23" fill="#222"/>
<use href="#xb" x="1833" y="982"/>

<!-- taskbar -->
<rect x="0" y="1020" width="1920" height="60" fill="#1a1f2b"/>
<rect x="0" y="1020" width="72" height="60" fill="#1a2129"/>
<rect x="73" y="1021" width="515" height="59" fill="#333" stroke="#5a5a5a" stroke-width="2"/>
<path d="M24 1041.500L34.500 1040V1049.500H24ZM36 1040L48 1038V1049.500H36ZM24 1051H34.500V1060.500L24 1059ZM36 1051H48V1062L36 1060.500Z" fill="#fff"/>
<circle cx="104" cy="1047" r="9" fill="none" stroke="#e4e4e4" stroke-width="1.800"/><path d="M98 1054L90 1062" stroke="#e4e4e4" stroke-width="1.800"/>
<text x="132" y="1059" font-size="22" fill="#cfcfcf" textLength="197" lengthAdjust="spacingAndGlyphs">Type here to search</text>
<path d="M612 1039H636M612 1060H636M613 1044H623V1055H613M628 1044H635V1055H628" fill="none" stroke="#dcdcdc" stroke-width="1.200"/>
<circle cx="701" cy="1050" r="18" fill="#0f78c8"/><path d="M690 1037Q701 1028 712 1037Q721 1046 717 1056Q709 1050 702 1049Q692 1049 690 1037Z" fill="#3ec29a"/><path d="M692 1053Q696 1063 709 1062Q700 1068 690 1060Z" fill="#0c4f9e"/><path d="M702 1049Q711 1050 716 1056Q713 1060 706 1059Q700 1056 702 1049Z" fill="#1a1f2b"/>
<path d="M760 1037H770L773 1040H791V1063H760Z" fill="#f9d25c"/><path d="M760 1037H770L773 1040H760Z" fill="#d89e1a"/><rect x="769" y="1048" width="15" height="15" fill="#2f7cc2"/><rect x="773" y="1055" width="7" height="8" fill="#f9d25c"/>
<rect x="746" y="1077" width="61" height="3" fill="#76c8d8"/>
<path d="M846 1033H868V1066H846Z" fill="#1d87d9"/><path d="M852 1048H868V1066H852Z" fill="#0e62b0"/><rect x="833" y="1041" width="20" height="19" rx="2" fill="#0f5fa8"/><text x="843" y="1056" font-size="14" font-weight="bold" fill="#fff" text-anchor="middle">O</text>
<rect x="909" y="1033" width="34" height="34" rx="10" fill="#2d8cff"/><rect x="916" y="1043" width="13" height="13" rx="2" fill="#fff"/><path d="M931 1047L937 1043V1056L931 1052Z" fill="#fff"/>
<rect x="965" y="1020" width="73" height="60" fill="#484c56"/><rect x="965" y="1077" width="73" height="3" fill="#76c8d8"/>
<circle cx="1001" cy="1050" r="17" fill="#ea4335"/><path d="M1001 1050L1016 1058A17 17 0 0 1 996 1066.500Z" fill="#34a853"/><path d="M1001 1050L1018 1050A17 17 0 0 1 996 1066.500L1016 1058Z" fill="#fbbc05"/><path d="M1001 1050L996 1066.500A17 17 0 0 1 985 1044Z" fill="#34a853"/><circle cx="1001" cy="1050" r="8" fill="#fff"/><circle cx="1001" cy="1050" r="6" fill="#4285f4"/>
<path d="M1059 1045L1066 1050L1059 1056V1061L1064 1063L1076 1052L1090 1066L1094 1064V1035L1090 1032L1076 1046L1064 1037Z M1078 1049L1087 1041V1058Z" fill="#0e8ad6" fill-rule="evenodd"/>
<circle cx="1151" cy="1050" r="15" fill="none" stroke="#3aa53a" stroke-width="6"/>
<path d="M1140 1040L1147 1047M1137 1048L1144 1054M1139 1056L1146 1062" stroke="#1a1f2b" stroke-width="1.200"/>
<circle cx="1437" cy="1050" r="15" fill="#f6b83c"/><path d="M1429 1058A5 5 0 0 1 1433 1049A5.500 5.500 0 0 1 1443 1049A4.500 4.500 0 0 1 1445 1058Z" fill="#bcdcf5"/>
<text x="1468" y="1059" font-size="20" fill="#f2f2f2" textLength="42" lengthAdjust="spacingAndGlyphs">29°C</text>
<path d="M1537 1054L1546 1045L1555 1054" fill="none" stroke="#e4e4e4" stroke-width="1.300"/>
<rect x="1573.500" y="1045.500" width="20" height="12" fill="none" stroke="#e4e4e4" stroke-width="1.200"/><rect x="1577" y="1047" width="15" height="9" fill="#fff"/><path d="M1572 1041H1580V1044H1572ZM1574 1037V1041M1578 1037V1041" fill="#1a1f2b" stroke="#e4e4e4" stroke-width="1.200"/>
<path d="M1611 1060A13 13 0 0 1 1626 1041M1615 1060A9 9 0 0 1 1626 1047M1619 1060A5 5 0 0 1 1625 1053" fill="none" stroke="#b8b8b8" stroke-width="1.200"/><circle cx="1626" cy="1059" r="1.300" fill="#fff"/>
<path d="M1644 1047H1648L1654 1041V1060L1648 1054H1644ZM1658 1046A6 6 0 0 1 1658 1055M1661 1043A10 10 0 0 1 1661 1058" fill="none" stroke="#e4e4e4" stroke-width="1.200"/>
<text x="1682" y="1057" font-size="16" fill="#e6e6e6" textLength="34" lengthAdjust="spacingAndGlyphs">ENG</text>
<text x="1763" y="1043" font-size="18" fill="#f0f0f0" textLength="41" lengthAdjust="spacingAndGlyphs">15:47</text>
<text x="1738" y="1071" font-size="18" fill="#f0f0f0" textLength="92" lengthAdjust="spacingAndGlyphs">14-01-2022</text>
<path d="M1858 1039H1882V1057H1874.500L1870 1062L1866 1057H1858Z" fill="none" stroke="#f0f0f0" stroke-width="1.400"/>
<rect x="1910" y="1022" width="1" height="56" fill="#555"/>
</svg>
</body></html>
